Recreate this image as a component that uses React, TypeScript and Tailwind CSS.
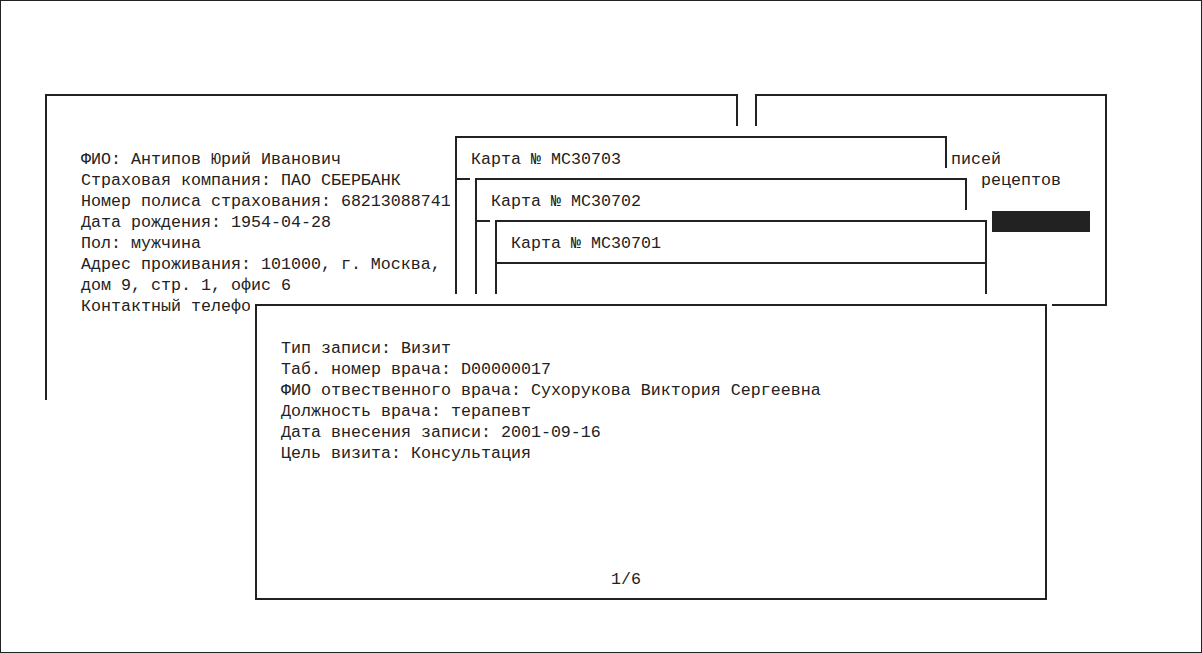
import React from "react";

const patient = [
  "ФИО: Антипов Юрий Иванович",
  "Страховая компания: ПАО СБЕРБАНК",
  "Номер полиса страхования: 68213088741",
  "Дата рождения: 1954-04-28",
  "Пол: мужчина",
  "Адрес проживания: 101000, г. Москва,",
  "дом 9, стр. 1, офис 6",
  "Контактный телефон: +7 (495) 123-45-67",
];

const record = [
  "Тип записи: Визит",
  "Таб. номер врача: D00000017",
  "ФИО отвественного врача: Сухорукова Виктория Сергеевна",
  "Должность врача: терапевт",
  "Дата внесения записи: 2001-09-16",
  "Цель визита: Консультация",
];

const cards = [
  { id: "МС30703", pos: "left-[449px] top-[125px]" },
  { id: "МС30702", pos: "left-[469px] top-[167px]" },
  { id: "МС30701", pos: "left-[489px] top-[209px]" },
];

const App = () => {
  return (
    <div className="relative w-[1202px] h-[653px] overflow-hidden border border-[#222] bg-white text-[#222] font-['Liberation_Mono',monospace] text-[16.67px] leading-[21px]">
      {/* patient window */}
      <div className="absolute left-[44px] top-[93px] w-[693px] h-[306px] border-t-2 border-l-2 border-r-2 border-[#222] pl-[34px] pt-[53px]">
        {patient.map((line) => (
          <div key={line} className="whitespace-pre">
            {line}
          </div>
        ))}
      </div>

      {/* menu window */}
      <div className="absolute left-[754px] top-[93px] w-[352px] h-[212px] border-2 border-[#222] bg-white pl-[104px] pt-[53px]">
        <div className="whitespace-pre">Журнал записей</div>
        <div className="whitespace-pre">Журнал всех рецептов</div>
        <div className="h-[21px]" />
        <div className="w-[229px] h-[21px] -mt-px bg-[#222]" />
      </div>

      {/* card stack */}
      {cards.map((c) => (
        <div key={c.id} className={`absolute ${c.pos} bg-white px-[5px] py-[10px]`}>
          <div className="w-[492px] h-[200px] border-2 border-[#222] bg-white">
            <div className="border-b-2 border-[#222] pl-[14px] pr-[13px] pt-[11px] pb-[8px] whitespace-pre">
              Карта № {c.id}
            </div>
          </div>
        </div>
      ))}

      {/* record window */}
      <div className="absolute left-[249px] top-[293px] bg-white px-[5px] py-[10px]">
        <div className="w-[792px] h-[296px] border-2 border-[#222] bg-white flex flex-col pl-[24px] pt-[32px] pb-[8px]">
          {record.map((line) => (
            <div key={line} className="whitespace-pre">
              {line}
            </div>
          ))}
          <div className="mt-auto w-[690px] text-center">1/6</div>
        </div>
      </div>
    </div>
  );
};

export default App;
